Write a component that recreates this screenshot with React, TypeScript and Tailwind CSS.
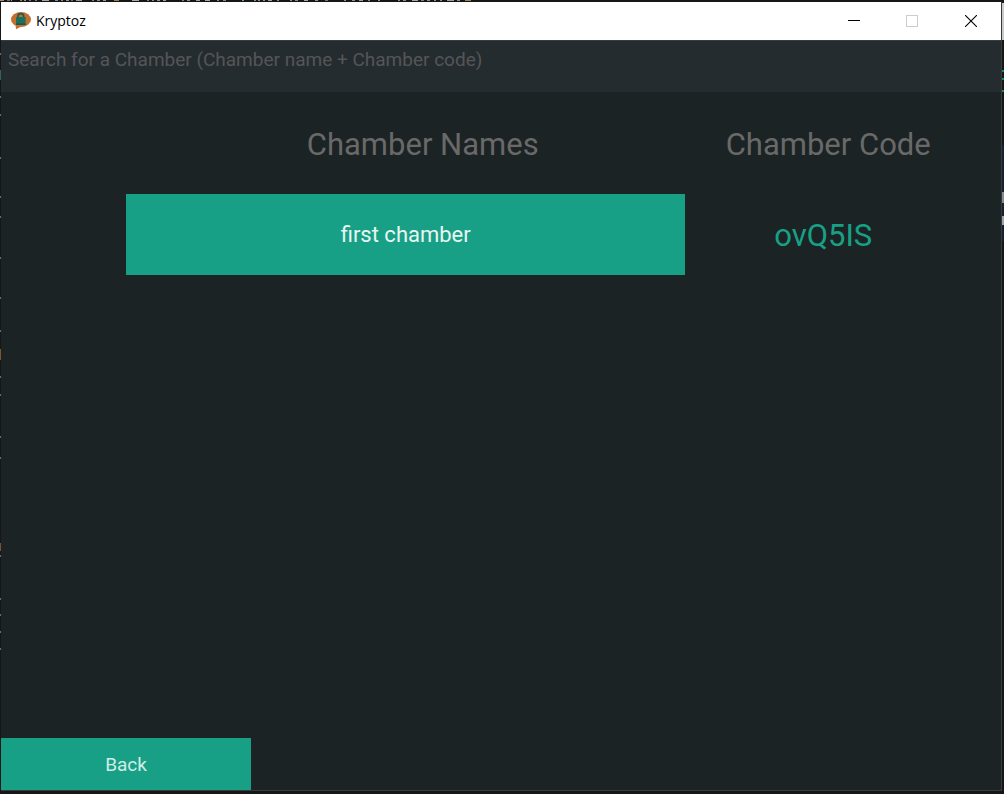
import React from "react";

function Logo() {
  return (
    <svg width="20" height="18" viewBox="0 0 20 18" aria-hidden="true">
      <ellipse cx="10" cy="7.5" rx="10" ry="7.5" fill="#c2702f" />
      <path d="M4.5 12.5 L5 17.3 L11 14.3 Z" fill="#c2702f" />
      <path d="M7 6 V4 Q7 1.6 9.8 1.6 Q12.6 1.6 12.6 4 V6" fill="none" stroke="#24594b" strokeWidth="1.6" />
      <rect x="5" y="5" width="9.6" height="8" rx="0.4" fill="#1b6f5e" />
      <path d="M5 11.5 H14.6 V13 H5 Z" fill="#235448" />
    </svg>
  );
}

type Mark = [x: number, width: number, color: string];

const topMarks: Mark[] = [
  [0, 4, "#9a8f86"], [7, 3, "#8e6a48"], [11, 1, "#7fa6c4"], [20, 2, "#9b7a55"], [24, 2, "#8a9aa8"],
  [29, 2, "#777777"], [35, 2, "#a07850"], [42, 7, "#a3a8ac"], [55, 3, "#6f93b3"], [61, 2, "#a18660"],
  [66, 3, "#8d99a3"], [71, 2, "#707070"], [76, 6, "#9ba0a3"], [92, 2, "#5f8f91"], [97, 3, "#a58666"],
  [103, 3, "#8c9cab"], [114, 5, "#9c7c58"], [132, 7, "#aaaaaa"], [147, 2, "#5f8f91"], [152, 2, "#9d8164"],
  [157, 3, "#8897a5"], [163, 3, "#a0a0a0"], [182, 2, "#9b7a55"], [187, 3, "#8897a5"], [196, 4, "#9aa4aa"],
  [205, 5, "#a8a8a8"], [217, 2, "#6f93b3"], [223, 3, "#a18660"], [242, 2, "#7894ad"], [254, 2, "#6aa093"],
  [258, 2, "#a58666"], [263, 2, "#8897a5"], [268, 4, "#a0a0a0"], [277, 2, "#7894ad"], [290, 2, "#6aa093"],
  [295, 3, "#a58666"], [304, 4, "#a3a8ac"], [315, 3, "#8897a5"], [325, 3, "#777777"], [344, 2, "#6aa093"],
  [352, 3, "#7894ad"], [359, 4, "#a0a0a0"], [368, 2, "#a58666"], [378, 2, "#8897a5"], [398, 2, "#6aa093"],
  [403, 3, "#a58666"], [412, 6, "#a3a8ac"], [421, 3, "#a07850"], [427, 3, "#8897a5"], [434, 2, "#7894ad"],
  [440, 2, "#a18660"], [447, 7, "#a0a0a0"], [457, 3, "#8897a5"], [465, 6, "#9d8164"],
];

const leftMarks = [
  53, 76, 96, 114, 157, 196, 216, 257, 297, 330, 376, 394, 436, 457, 555, 598, 614, 631, 648,
];

function Backdrop() {
  return (
    <svg className="absolute inset-0 h-full w-full" aria-hidden="true">
      {topMarks.map(([x, w, color]) => (
        <rect key={x} x={x} y="0" width={w} height="1" fill={color} />
      ))}
      {leftMarks.map((y) => (
        <rect key={y} x="0" y={y} width="1" height="2" fill="#6c6c6c" />
      ))}
      <rect x="0" y="70" width="1" height="10" fill="#3c5b68" />
      <rect x="0" y="349" width="1" height="11" fill="#7a5827" />
      <rect x="0" y="543" width="1" height="8" fill="#79503b" />
      <svg x="100%" overflow="visible">
        <rect x="-2" y="3" width="2" height="37" fill="#c9c9c9" />
        <rect x="-2" y="70" width="2" height="2" fill="#12896a" />
        <rect x="-2" y="78" width="2" height="2" fill="#12896a" />
        <rect x="-2" y="90" width="2" height="2" fill="#12896a" />
        <rect x="-2" y="145" width="2" height="96" fill="#152130" />
        <rect x="-2" y="192" width="2" height="11" fill="#868a90" />
        <rect x="-2" y="216" width="2" height="9" fill="#a0a3a6" />
      </svg>
    </svg>
  );
}

function TitleBar() {
  return (
    <header className="flex h-[38px] shrink-0 items-center justify-between bg-white pl-[10px] text-black">
      <div className="flex items-center gap-[5px]">
        <Logo />
        <h1 className="font-['Open_Sans','Noto_Sans',sans-serif] text-sm leading-5">Kryptoz</h1>
      </div>
      <div className="flex h-full">
        <button aria-label="Minimize" className="flex w-[58px] items-center justify-center">
          <svg width="12" height="12" viewBox="0 0 12 12"><path d="M0 5.5H12" stroke="#000" /></svg>
        </button>
        <button aria-label="Maximize" disabled className="flex w-[58px] items-center justify-center">
          <svg width="12" height="12" viewBox="0 0 12 12"><rect x="0.5" y="0.5" width="11" height="11" fill="none" stroke="#ccc" /></svg>
        </button>
        <button aria-label="Close" className="flex w-[60px] items-center justify-center">
          <svg width="12" height="12" viewBox="0 0 12 12"><path d="M0 0L12 12M12 0L0 12" stroke="#000" strokeWidth="1.1" /></svg>
        </button>
      </div>
    </header>
  );
}

const chambers = [{ name: "first chamber", code: "ovQ5IS" }];

export default function App() {
  return (
    <div className="relative flex h-screen flex-col bg-[#161617] pt-[2px] pr-[2px] pb-[3px] pl-px font-[Roboto,sans-serif]">
      <Backdrop />
      <div className="relative flex min-h-0 flex-1 flex-col border-r border-b border-[#383c3d] bg-[#1c2324]">
        <TitleBar />
        <input
          type="text"
          aria-label="Search for a Chamber"
          placeholder="Search for a Chamber (Chamber name + Chamber code)"
          className="h-[52px] w-full shrink-0 border-t border-[#343c3e] bg-[#242c2f] px-[7px] pb-[14px] text-[19px] text-gray-300 outline-none placeholder:text-[#555558] placeholder:opacity-100"
        />
        <main className="min-h-0 flex-1 pr-[4%] pl-[12.5%]">
          <table className="w-full table-fixed border-collapse">
            <thead>
              <tr className="h-[102px] text-[31px] text-[#696969]">
                <th scope="col" className="w-[67%] pt-1 pb-0 pl-[34px] font-normal">Chamber Names</th>
                <th scope="col" className="pt-1 pb-0 pl-[10px] font-normal">Chamber Code</th>
              </tr>
            </thead>
            <tbody>
              {chambers.map((c) => (
                <tr key={c.code}>
                  <td className="p-0">
                    <button className="block h-[81px] w-full bg-[#18a086] text-[22px] text-[#e8f5f2]">{c.name}</button>
                  </td>
                  <td className="px-0 pt-1 pb-0 text-center text-[31px] text-[#18a086]">{c.code}</td>
                </tr>
              ))}
            </tbody>
          </table>
        </main>
        <footer className="shrink-0">
          <button className="block h-[52px] w-1/4 bg-[#18a086] pt-[2px] text-[19px] text-[#d1ece6]">Back</button>
        </footer>
      </div>
    </div>
  );
}
